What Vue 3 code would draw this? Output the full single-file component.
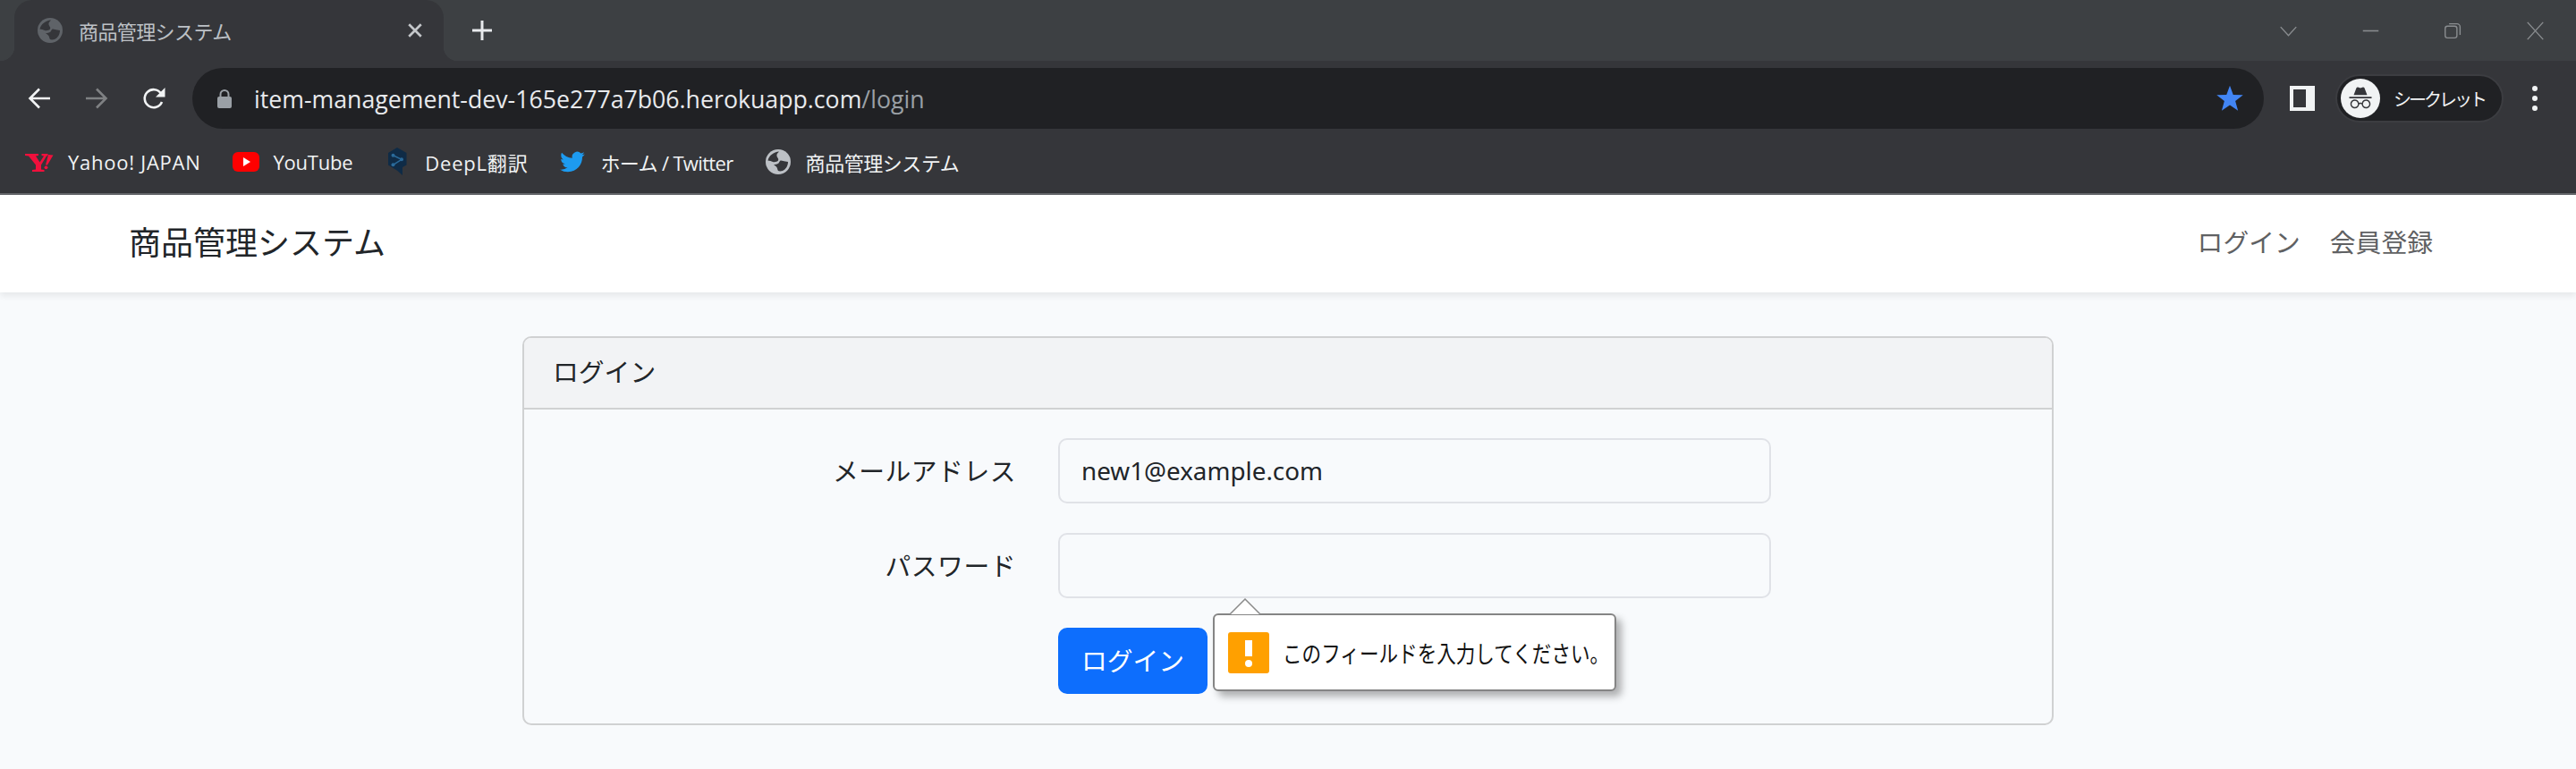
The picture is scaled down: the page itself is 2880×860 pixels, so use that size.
<script setup>
// letter-spacing per label, the original UI font has slightly different widths
const bookmarks = [
  { name: 'Yahoo! JAPAN', icon: 'yahoo', spacing: 0.75 },
  { name: 'YouTube', icon: 'youtube', spacing: -0.25 },
  { name: 'DeepL翻訳', icon: 'deepl', spacing: 0.8 },
  { name: 'ホーム / Twitter', icon: 'twitter', spacing: -0.65 },
  { name: '商品管理システム', icon: 'globe', spacing: -0.45 },
];
</script>

<template>
  <div class="browser">
    <div class="tabstrip">
      <div class="tab">
        <svg class="tab-globe" viewBox="0 0 28 28">
          <circle cx="14" cy="14" r="14" fill="#5f6368" />
          <path fill="#35363a" d="M2.500 12.500C3.500 7 9 3 15 2.500c-1.500 1.500-3 3-2.500 5s2.500 3 1.500 5c-1 1.500-4 2-6 1.500s-3-1.500-6-1.500z" />
          <path fill="#35363a" d="M17 12.500c2 0 3 1 5 1l3 .5c0 4.500-2.500 8.500-6 10-2 .5-4 .5-5 0-1-1-.5-3-2-4.500-1-1-2-1.500-3-2.500 2 0 4 0 5.500-1.500 1-1 1-3 2.500-3z" />
        </svg>
        <span class="tab-title">商品管理システム</span>
        <svg class="tab-close" viewBox="0 0 16 16"><path d="M2 2l12 12M14 2L2 14" stroke="#c4c7ca" stroke-width="2.400" /></svg>
      </div>
      <svg class="new-tab" viewBox="0 0 24 24"><path d="M12 1v22M1 12h22" stroke="#e8eaed" stroke-width="3" /></svg>
      <div class="window-controls">
        <svg viewBox="0 0 24 24" class="wc"><path d="M2 7l10 11L22 7" fill="none" stroke="#8a8d90" stroke-width="1.600" /></svg>
        <svg viewBox="0 0 24 24" class="wc"><path d="M2 12h20" stroke="#8a8d90" stroke-width="1.800" /></svg>
        <svg viewBox="0 0 24 24" class="wc"><rect x="2" y="6" width="15" height="15" rx="3" fill="none" stroke="#8a8d90" stroke-width="1.600" /><path d="M7 3h10a4 4 0 0 1 4 4v10" fill="none" stroke="#8a8d90" stroke-width="1.600" /></svg>
        <svg viewBox="0 0 24 24" class="wc"><path d="M2 1l20 22M22 1L2 23" stroke="#8a8d90" stroke-width="1.600" /></svg>
      </div>
    </div>

    <div class="toolbar">
      <svg class="nav-icon" viewBox="0 0 26 26"><path d="M25 13H3M13 2.500L2.500 13 13 23.500" fill="none" stroke="#f1f3f4" stroke-width="2.600" /></svg>
      <svg class="nav-icon" viewBox="0 0 26 26"><path d="M1 13h22M13 2.500L23.500 13 13 23.500" fill="none" stroke="#7f8183" stroke-width="2.600" /></svg>
      <svg class="nav-icon" viewBox="0 0 26 26"><path d="M22 17a10 10 0 1 1-1-9.500" fill="none" stroke="#f1f3f4" stroke-width="2.600" /><path d="M25.500 1v10.500H15z" fill="#f1f3f4" /></svg>
      <div class="omnibox">
        <svg class="lock" viewBox="0 0 16 21"><path d="M3.500 9V5.500a4.500 4.500 0 0 1 9 0V9" fill="none" stroke="#9aa0a6" stroke-width="2" /><rect y="8" width="16" height="13" rx="2" fill="#9aa0a6" /></svg>
        <span class="url">item-management-dev-165e277a7b06.herokuapp.com<span class="url-path">/login</span></span>
        <svg class="star" viewBox="0 0 24 24"><path d="M12 0.500l3 8.200 8.800.300-6.900 5.400 2.400 8.500L12 18l-7.300 4.900 2.400-8.500L.2 9l8.800-.3z" fill="#4285f4" /></svg>
      </div>
      <div class="side-panel"></div>
      <div class="incognito">
        <span class="incognito-avatar">
          <svg viewBox="0 0 24 24"><path fill="#35363a" d="M17.060 13c-1.860 0-3.420 1.330-3.820 3.100-.95-.41-1.820-.3-2.480-.01C10.350 14.310 8.790 13 6.940 13 4.770 13 3 14.790 3 17s1.770 4 3.940 4c2.060 0 3.740-1.620 3.900-3.680.34-.24 1.230-.69 2.320.02.18 2.050 1.840 3.660 3.900 3.660 2.170 0 3.940-1.790 3.940-4s-1.770-4-3.940-4zM6.940 19.860c-1.560 0-2.810-1.280-2.810-2.860s1.260-2.860 2.810-2.860c1.560 0 2.810 1.280 2.810 2.860s-1.250 2.860-2.810 2.860zm10.120 0c-1.560 0-2.810-1.280-2.810-2.860s1.250-2.860 2.810-2.860 2.820 1.280 2.820 2.860-1.270 2.860-2.820 2.860zM22 10.500H2V12h20v-1.500zm-6.470-7.870c-.22-.49-.78-.75-1.310-.58L12 2.790l-2.230-.74-.05-.01c-.53-.15-1.090.13-1.290.64L6 9h12l-2.440-6.320-.03-.05z" /></svg>
        </span>
        <span class="incognito-text">シークレット</span>
      </div>
      <div class="menu-dots"><i></i><i></i><i></i></div>
    </div>

    <div class="bookmarks">
      <div v-for="b in bookmarks" :key="b.name" class="bookmark">
        <svg v-if="b.icon === 'yahoo'" class="bm-icon" viewBox="8 4 30 30">
          <path fill="#f0103c" d="M6 10h15v2l-3 .5 4.500 7 4.500-7-2.500-.5v-2h7v2l-1.500.5-6 10v5l3.500.5v2H14v-2l4-.5v-5L10 12.500 6 12z" />
          <path fill="#f0103c" d="M32 11l5.500.5-6.500 11h-2z" />
          <circle cx="29.500" cy="25.300" r="1.900" fill="#f0103c" />
        </svg>
        <svg v-else-if="b.icon === 'youtube'" class="bm-icon" viewBox="0 0 30 30">
          <rect y="4" width="30" height="22" rx="6" fill="#f00" />
          <path d="M12 10l8 5-8 5z" fill="#fff" />
        </svg>
        <svg v-else-if="b.icon === 'deepl'" class="bm-icon" viewBox="5 5 30 30">
          <path fill="#0f2b46" d="M20 4l10.500 6v13.500L26 26v9l-5.500-5L10 23.500V10z" />
          <path fill="none" stroke="#2a6a9a" stroke-width="1.500" d="M15.500 12.700L25 17.300l-9.500 6" />
          <circle cx="15.500" cy="12.700" r="2" fill="#2a6a9a" /><circle cx="25" cy="17.300" r="2" fill="#2a6a9a" /><circle cx="15.500" cy="23.300" r="2" fill="#2a6a9a" />
        </svg>
        <svg v-else-if="b.icon === 'twitter'" class="bm-icon" viewBox="-1 -1 26 26">
          <path fill="#1d9bf0" d="M23.953 4.570a10 10 0 01-2.825.775 4.958 4.958 0 002.163-2.723c-.951.555-2.005.959-3.127 1.184a4.920 4.920 0 00-8.384 4.482C7.690 8.095 4.067 6.130 1.640 3.162a4.822 4.822 0 00-.666 2.475c0 1.710.870 3.213 2.188 4.096a4.904 4.904 0 01-2.228-.616v.060a4.923 4.923 0 003.946 4.827 4.996 4.996 0 01-2.212.085 4.936 4.936 0 004.604 3.417 9.867 9.867 0 01-6.102 2.105c-.390 0-.779-.023-1.170-.067a13.995 13.995 0 007.557 2.209c9.053 0 13.998-7.496 13.998-13.985 0-.210 0-.420-.015-.630A9.935 9.935 0 0024 4.590z" />
        </svg>
        <svg v-else class="bm-icon" viewBox="-1 -1 30 30">
          <circle cx="14" cy="14" r="14" fill="#bdc1c6" />
          <path fill="#35363a" d="M2.500 12.500C3.500 7 9 3 15 2.500c-1.500 1.500-3 3-2.500 5s2.500 3 1.500 5c-1 1.500-4 2-6 1.500s-3-1.500-6-1.500z" />
          <path fill="#35363a" d="M17 12.500c2 0 3 1 5 1l3 .5c0 4.500-2.500 8.500-6 10-2 .5-4 .5-5 0-1-1-.5-3-2-4.500-1-1-2-1.500-3-2.500 2 0 4 0 5.500-1.500 1-1 1-3 2.500-3z" />
        </svg>
        <span :style="{ letterSpacing: b.spacing + 'px' }">{{ b.name }}</span>
      </div>
    </div>
  </div>

  <nav class="navbar">
    <a class="brand">商品管理システム</a>
    <div class="nav-links">
      <a>ログイン</a>
      <a>会員登録</a>
    </div>
  </nav>

  <main class="page">
    <section class="card">
      <header class="card-header">ログイン</header>
      <form class="card-body" @submit.prevent>
        <div class="row">
          <label class="row-label" for="email">メールアドレス</label>
          <input id="email" class="field" type="email" value="new1@example.com" />
        </div>
        <div class="row">
          <label class="row-label" for="password">パスワード</label>
          <input id="password" class="field" type="password" />
        </div>
        <div class="row actions">
          <span class="row-label"></span>
          <div class="action-wrap">
            <button class="submit" type="submit">ログイン</button>
            <div class="bubble">
              <svg class="bubble-arrow" viewBox="0 0 36 19"><path d="M1 18L18 1l17 17" fill="#fff" stroke="#8a8a8a" stroke-width="1.500" /></svg>
              <span class="bubble-icon"><i></i><b></b></span>
              <span class="bubble-text">このフィールドを入力してください。</span>
            </div>
          </div>
        </div>
      </form>
    </section>
  </main>
</template>

<style>
html, body {
  background: #f8fafc;
}
</style>

<style scoped>
.browser {
  background: #35363a;
  color: #fff;
  font-family: "Open Sans", "Noto Sans CJK JP", sans-serif;
  border-bottom: 2px solid #64666a;
}

.tabstrip {
  display: flex;
  align-items: center;
  height: 68px;
  padding-left: 16px;
  background: #3d4043;
}
.tab {
  position: relative;
  display: flex;
  align-items: center;
  width: 480px;
  height: 68px;
  box-sizing: border-box;
  padding: 0 23px 0 26px;
  background: #35363a;
  border-radius: 20px 20px 0 0;
}
.tab::before,
.tab::after {
  content: "";
  position: absolute;
  bottom: 0;
  width: 16px;
  height: 16px;
}
.tab::before {
  left: -16px;
  background: radial-gradient(circle at 0 0, #3d4043 16px, #35363a 16.500px);
}
.tab::after {
  right: -16px;
  background: radial-gradient(circle at 100% 0, #3d4043 16px, #35363a 16.500px);
}
.tab-globe {
  width: 28px;
  height: 28px;
  margin-right: 18px;
}
.tab-title {
  flex: 1;
  font-size: 22px;
  letter-spacing: -0.6px;
  color: #bdc1c6;
}
.tab-close {
  width: 18px;
  height: 18px;
}
.new-tab {
  width: 24px;
  height: 24px;
  margin-left: 31px;
}
.window-controls {
  display: flex;
  gap: 71px;
  margin-left: auto;
  margin-right: 35px;
  align-items: center;
}
.wc {
  width: 21px;
  height: 21px;
}

.toolbar {
  display: flex;
  align-items: center;
  height: 84px;
  padding-left: 31px;
}
.nav-icon {
  width: 26px;
  height: 26px;
  margin-right: 38px;
}
.omnibox {
  display: flex;
  align-items: center;
  width: 2316px;
  height: 68px;
  margin-left: -8px;
  box-sizing: border-box;
  padding: 0 23px 0 28px;
  border-radius: 34px;
  background: #202124;
}
.lock {
  width: 16px;
  height: 21px;
  margin-right: 25px;
}
.url {
  flex: 1;
  font-size: 26.700px;
  color: #e8eaed;
  white-space: nowrap;
}
.url-path {
  color: #9aa0a6;
}
.star {
  width: 30px;
  height: 30px;
}
.side-panel {
  width: 28px;
  height: 28px;
  box-sizing: border-box;
  margin-left: 29px;
  border: solid #f1f3f4;
  border-width: 4px 10px 4px 4px;
  background: #35363a;
}
.incognito {
  display: flex;
  align-items: center;
  width: 188px;
  height: 54px;
  box-sizing: border-box;
  margin-left: 23px;
  padding-left: 4px;
  border: 2px solid #3c3d41;
  border-radius: 27px;
  background: #202124;
}
.incognito-avatar {
  display: flex;
  align-items: center;
  justify-content: center;
  width: 44px;
  height: 44px;
  border-radius: 50%;
  background: #f1f3f4;
}
.incognito-avatar svg {
  width: 30px;
  height: 30px;
}
.incognito-text {
  margin-left: 15px;
  font-size: 20px;
  letter-spacing: -3px;
  color: #f1f3f4;
}
.menu-dots {
  display: flex;
  flex-direction: column;
  gap: 5px;
  margin-left: 32px;
}
.menu-dots i {
  width: 6px;
  height: 6px;
  border-radius: 50%;
  background: #f1f3f4;
}

.bookmarks {
  display: flex;
  align-items: center;
  gap: 35px;
  height: 64px;
  padding: 0 0 7px 30px;
  box-sizing: border-box;
  font-size: 22px;
}
.bookmark {
  display: flex;
  align-items: center;
  gap: 16px;
  color: #f1f3f4;
  white-space: nowrap;
}
.bm-icon {
  width: 30px;
  height: 30px;
  overflow: visible;
}

.navbar {
  display: flex;
  align-items: center;
  justify-content: space-between;
  height: 109px;
  padding: 0 160px 6px 144px;
  box-sizing: border-box;
  background: #fff;
  box-shadow: 0 4px 7px rgba(0, 0, 0, 0.075);
  font-family: "Noto Sans", "Noto Sans CJK JP", sans-serif;
  position: relative;
}
.brand {
  font-size: 36px;
  color: #212529;
}
.nav-links {
  display: flex;
  gap: 33px;
  font-size: 28.800px;
  color: #5f6163;
}

.page {
  height: 533px;
  box-sizing: border-box;
  padding-top: 49px;
  font-family: "Noto Sans", "Noto Sans CJK JP", sans-serif;
  color: #212529;
  font-size: 28.800px;
}
.card {
  width: 1712px;
  margin: 0 auto;
  box-sizing: border-box;
  border: 2px solid #d0d1d2;
  border-radius: 10px;
}
.card-header {
  display: flex;
  align-items: center;
  height: 80px;
  box-sizing: border-box;
  padding: 0 0 6px 32px;
  background: #f2f3f5;
  border-bottom: 2px solid #d0d1d2;
  border-radius: 8px 8px 0 0;
}
.card-body {
  display: flex;
  flex-direction: column;
  gap: 33px;
  padding: 32px 0 33px;
}
.row {
  display: flex;
  align-items: center;
  gap: 47px;
}
.row-label {
  width: 550px;
  padding-bottom: 3px;
  letter-spacing: 0.5px;
  text-align: right;
  flex: none;
}
.field {
  width: 797px;
  height: 73px;
  box-sizing: border-box;
  padding: 0 24px 2px;
  border: 2px solid #e0e2e7;
  border-radius: 10px;
  background: #f8fafc;
  color: #212529;
  font: inherit;
  font-size: 27.800px;
  outline: none;
}
.action-wrap {
  position: relative;
}
.submit {
  display: block;
  width: 167px;
  height: 74px;
  padding: 0 0 4px;
  border: none;
  border-radius: 10px;
  background: #0d6efd;
  color: #fff;
  font: inherit;
}
.bubble {
  position: absolute;
  left: 173px;
  top: -16px;
  display: flex;
  align-items: center;
  width: 451px;
  height: 87px;
  box-sizing: border-box;
  padding: 0 0 0 15px;
  background: #fff;
  border: 2px solid #858585;
  border-radius: 6px;
  box-shadow: 6px 6px 8px rgba(0, 0, 0, 0.3);
  color: #111;
}
.bubble-arrow {
  position: absolute;
  left: 16px;
  top: -19px;
  width: 36px;
  height: 19px;
}
.bubble-icon {
  display: flex;
  flex-direction: column;
  align-items: center;
  width: 46px;
  height: 46px;
  flex: none;
  border-radius: 3px;
  background: #ffa000;
}
.bubble-icon i {
  width: 8px;
  height: 18px;
  margin-top: 9px;
  background: #fff;
}
.bubble-icon b {
  width: 8px;
  height: 8px;
  margin-top: 4px;
  border-radius: 50%;
  background: #fff;
}
.bubble-text {
  display: inline-block;
  margin-left: 15px;
  font-size: 26px;
  white-space: nowrap;
  transform: scaleX(0.83);
  transform-origin: left center;
}
</style>
